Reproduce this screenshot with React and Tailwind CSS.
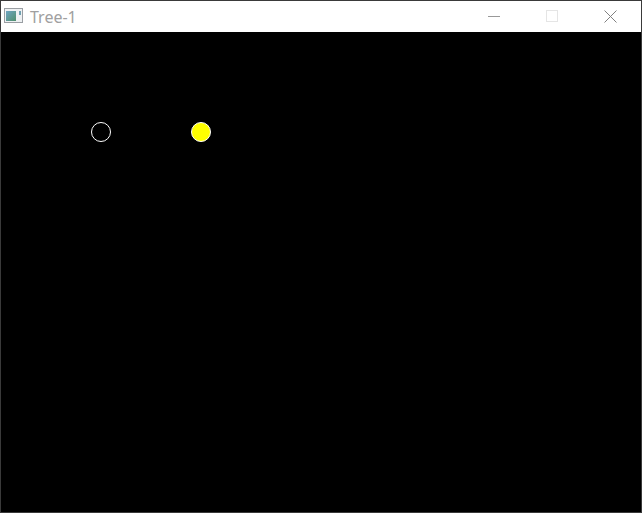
export default function App() {
  return (
    <div className="w-[642px] h-[513px] flex flex-col border border-[#3a3a3a] bg-black overflow-hidden">
      <div className="h-[31px] shrink-0 bg-white flex items-center">
        <svg className="ml-[3px] mt-[-1px]" width="20" height="16" viewBox="0 0 20 16">
          <defs>
            <linearGradient id="pane" x1="0" y1="0" x2="1" y2="1">
              <stop offset="0" stopColor="#6fa5c4" />
              <stop offset="1" stopColor="#4f8f6c" />
            </linearGradient>
          </defs>
          <rect x="0.5" y="0.5" width="18" height="14" fill="#eef1f3" stroke="#9a9ea3" />
          <rect x="2" y="3" width="10" height="10" fill="url(#pane)" />
          <rect x="15" y="3" width="2" height="4" fill="#6fa0b0" />
        </svg>
        <span className="ml-[6px] text-[16px] text-[#a0a0a0] font-['Noto_Sans',sans-serif] leading-none">Tree-1</span>
        <div className="ml-auto flex items-center h-full mt-[-1px]">
          <div className="w-[12px] h-px bg-[#999999] mr-[46px]" />
          <div className="w-[12px] h-[12px] border border-[#e5e5e5] mr-[46px]" />
          <svg className="mr-[24px]" width="13" height="13" viewBox="0 0 13 13">
            <path d="M0.5 0.5L12.5 12.5M12.5 0.5L0.5 12.5" stroke="#808080" strokeWidth="1" fill="none" />
          </svg>
        </div>
      </div>
      <div className="flex-1 flex items-start pt-[90px] pl-[90px] gap-[80px]">
        <div className="w-[20px] h-[20px] rounded-full border border-white" />
        <div className="w-[20px] h-[20px] rounded-full border border-white bg-[#ffff00]" />
      </div>
    </div>
  );
}
